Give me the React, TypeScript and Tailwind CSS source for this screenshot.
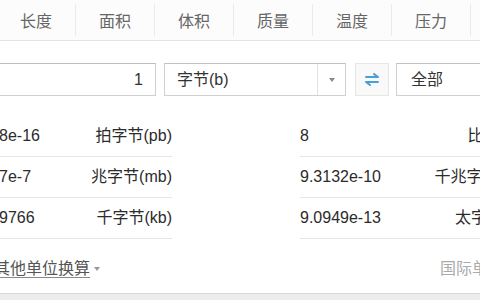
const tabs = ['长度', '面积', '体积', '质量', '温度', '压力'];

const leftRows = [
  { value: '8.8818e-16', unit: '拍字节(pb)' },
  { value: '9.5367e-7', unit: '兆字节(mb)' },
  { value: '0.0009766', unit: '千字节(kb)' }
];

const rightRows = [
  { value: '8', unit: '比特(bit)' },
  { value: '9.3132e-10', unit: '千兆字节(gb)' },
  { value: '9.0949e-13', unit: '太字节(tb)' }
];

function SwapIcon() {
  return (
    <svg width="14" height="13" viewBox="0 0 14 13" fill="none" stroke="#4a9fd8" strokeWidth="2">
      <path d="M1 4h12M9 1l4 3" strokeLinecap="round" />
      <path d="M13 9H1M5 12L1 9" strokeLinecap="round" />
    </svg>
  );
}

function ResultColumn({ rows, className }: { rows: { value: string; unit: string }[]; className: string }) {
  return (
    <div className={className}>
      {rows.map((row) => (
        <div
          key={row.unit}
          className="flex h-[41px] items-center justify-between whitespace-nowrap border-b border-[#e6e6e6] text-[16px] text-[#2b2b2b]"
        >
          <span>{row.value}</span>
          <span>{row.unit}</span>
        </div>
      ))}
    </div>
  );
}

export default function App() {
  return (
    <div
      className="relative flex h-[300px] w-[480px] flex-col overflow-hidden bg-white"
      style={{ fontFamily: '"Liberation Sans", "Noto Sans CJK SC", sans-serif' }}
    >
      {/* unit tabs */}
      <div className="flex h-[41px] shrink-0 border-b border-[#e3e3e3] bg-[#fcfcfc]">
        <div className="ml-[-3px] flex">
          {tabs.map((tab) => (
            <div key={tab} className="flex h-full w-[79px] shrink-0 items-center">
              <span className="flex-1 pt-[4px] text-center text-[16px] text-[#666]">{tab}</span>
              <span className="h-[32px] w-px bg-[#ebebeb]" />
            </div>
          ))}
        </div>
      </div>

      {/* input row */}
      <div className="mt-[22px] flex h-[33px] shrink-0 items-stretch">
        <div className="ml-[-20px] flex w-[176px] shrink-0 items-center justify-end border border-[#cfcfcf] border-t-[#bdbdbd] pr-[12px] text-[16px] text-[#333]">
          1
        </div>
        <div className="ml-[8px] flex w-[182px] shrink-0 border border-[#d0d0d0] border-t-[#c2c2c2] bg-white">
          <div className="flex flex-1 items-center pl-[12px] text-[16px] text-[#333]">字节(b)</div>
          <div className="flex w-[28px] items-center justify-center border-l border-[#e2e2e2]">
            <span className="h-0 w-0 border-x-[3.5px] border-t-[4px] border-x-transparent border-t-[#888]" />
          </div>
        </div>
        <div className="ml-[9px] flex w-[34px] shrink-0 items-center justify-center border border-[#e6e6e6] bg-[#f9f9f9]">
          <SwapIcon />
        </div>
        <div className="ml-[7px] flex w-[180px] shrink-0 items-center border border-[#d0d0d0] border-t-[#c2c2c2] pl-[14px] text-[16px] text-[#333]">
          全部
        </div>
      </div>

      {/* results */}
      <div className="mt-[20px] flex shrink-0">
        <ResultColumn rows={leftRows} className="ml-[-41px] w-[213px] shrink-0" />
        <ResultColumn rows={rightRows} className="ml-[128px] w-[227px] shrink-0" />
      </div>

      {/* footer */}
      <div className="mt-[18px] flex shrink-0 items-center whitespace-nowrap">
        <span className="ml-[-6px] flex items-center text-[16px] text-[#555]">
          <span className="underline decoration-[#888] underline-offset-[3px]">其他单位换算</span>
          <span className="ml-[4px] h-0 w-0 border-x-[3.5px] border-t-[4px] border-x-transparent border-t-[#999]" />
        </span>
        <span className="ml-auto mr-[-40px] shrink-0 text-[16px] text-[#aaa]">国际单位制</span>
      </div>

      <div className="mt-auto h-[7px] shrink-0 border-t border-[#d8d8d8] bg-[#ececec]" />
    </div>
  );
}
